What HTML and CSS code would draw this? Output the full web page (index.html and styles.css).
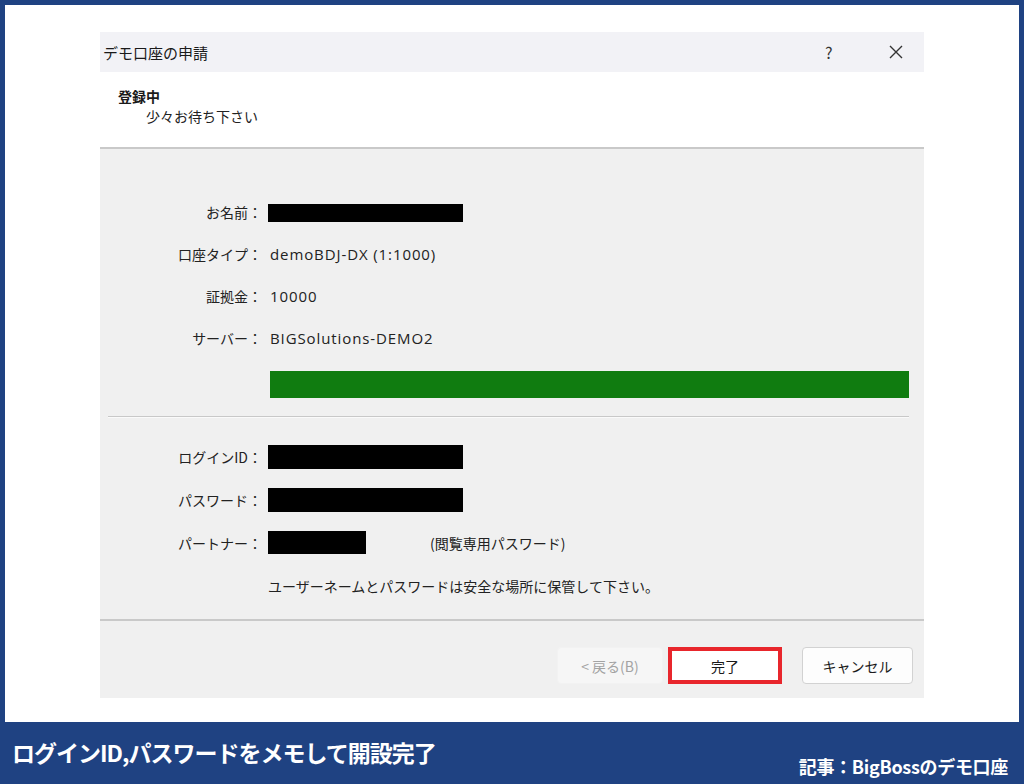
FILE: index.html
```html
<!DOCTYPE html>
<html lang="ja">
<head>
    <meta charset="UTF-8">
    <title>デモ口座の申請</title>
    <link rel="stylesheet" href="styles.css">
</head>
<body>

    <div class="canvas">
        <div class="dialog">
            <div class="titlebar">
                <span class="title">デモ口座の申請</span>
                <span class="help">?</span>
                <span class="close">
                    <svg width="16" height="16" viewBox="0 0 16 16">
                        <path d="M2 2 L14 14 M14 2 L2 14" stroke="#333" stroke-width="1.4" fill="none"/>
                    </svg>
                </span>
            </div>

            <div class="header">
                <div class="head-title">登録中</div>
                <div class="head-sub">少々お待ち下さい</div>
            </div>

            <div class="body">
                <div class="info">
                    <div class="label">お名前：</div>
                    <div class="value"><span class="mask mask-name"></span></div>

                    <div class="label">口座タイプ：</div>
                    <div class="value latin">demoBDJ-DX (1:1000)</div>

                    <div class="label">証拠金：</div>
                    <div class="value latin">10000</div>

                    <div class="label">サーバー：</div>
                    <div class="value latin">BIGSolutions-DEMO2</div>
                </div>

                <div class="progress"></div>
                <div class="divider"></div>

                <div class="info account">
                    <div class="label">ログインID：</div>
                    <div class="value"><span class="mask"></span></div>

                    <div class="label">パスワード：</div>
                    <div class="value"><span class="mask"></span></div>

                    <div class="label">パートナー：</div>
                    <div class="value"><span class="mask mask-short"></span><span class="hint">(閲覧専用パスワード)</span></div>

                    <div class="label"></div>
                    <div class="value note">ユーザーネームとパスワードは安全な場所に保管して下さい。</div>
                </div>
            </div>

            <div class="buttons">
                <button class="btn btn-back" disabled>&lt;&nbsp;戻る(B)</button>
                <button class="btn btn-done">完了</button>
                <button class="btn btn-cancel">キャンセル</button>
            </div>
        </div>
    </div>

    <div class="footer">
        <div class="caption">ログインID,パスワードをメモして開設完了</div>
        <div class="source">記事：BigBossのデモ口座</div>
    </div>

</body>
</html>
```

FILE: styles.css
```css
body {
    margin: 0;
    width: 1024px;
    height: 784px;
    background-color: #1f4282;
    font-family: "Noto Sans CJK JP", "Noto Sans", sans-serif;
    color: #1a1a1a;
    overflow: hidden;
}

.canvas {
    margin: 5px 5px 0 5px;
    height: 717px;
    background-color: #ffffff;
    padding-top: 27px;
    box-sizing: border-box;
}

.dialog {
    margin-left: 95px;
    width: 824px;
    height: 666px;
    background-color: #f0f0f0;
    display: flex;
    flex-direction: column;
}

.titlebar {
    height: 40px;
    background-color: #f2f2f6;
    display: flex;
    align-items: center;
    font-size: 15px;
}

.titlebar .title {
    margin-left: 3px;
    flex: 1;
}

.titlebar .help {
    width: 16px;
    font-size: 16px;
    color: #333;
    margin-right: 47px;
}

.titlebar .close {
    display: flex;
    margin-right: 20px;
}

.header {
    height: 77px;
    background-color: #ffffff;
    border-bottom: 2px solid #c9c9c9;
    padding: 14px 0 0 18px;
    box-sizing: border-box;
}

.head-title {
    font-size: 14px;
    font-weight: bold;
    line-height: 20px;
}

.head-sub {
    font-size: 14px;
    line-height: 21px;
    margin-left: 28px;
    color: #222;
}

.body {
    height: 472px;
    padding-top: 42px;
    box-sizing: border-box;
    border-bottom: 2px solid #c9c9c9;
}

.info {
    display: grid;
    grid-template-columns: 162px 1fr;
    grid-auto-rows: 42px;
    column-gap: 6px;
    font-size: 14px;
}

.info .label {
    display: flex;
    align-items: center;
    justify-content: flex-end;
    color: #222;
}

.info .value {
    display: flex;
    align-items: center;
    color: #222;
}

.info .latin {
    font-family: "Open Sans", "Noto Sans CJK JP", sans-serif;
    font-size: 15px;
    letter-spacing: 0.9px;
    padding-left: 2px;
}

.mask {
    display: inline-block;
    width: 195px;
    height: 24px;
    background-color: #000;
}

.mask-name {
    height: 18px;
    margin-top: 2px;
}

.mask-short {
    width: 98px;
    height: 23px;
}

.hint {
    margin-left: 64px;
}

.progress {
    margin: 12px 15px 0 170px;
    height: 27px;
    background-color: #107c10;
}

.divider {
    margin: 18px 15px 0 8px;
    height: 1px;
    background-color: #c8c8c8;
    border-bottom: 1px solid #fafafa;
}

.account {
    margin-top: 17px;
    grid-auto-rows: 43px;
}

.buttons {
    flex: 1;
    display: flex;
    justify-content: flex-end;
    align-items: flex-start;
    padding: 26px 11px 0 0;
    gap: 5px;
}

.btn {
    font-family: "Noto Sans CJK JP", "Noto Sans", sans-serif;
    font-size: 14px;
    height: 37px;
    border-radius: 4px;
    box-sizing: border-box;
}

.btn-back {
    width: 106px;
    background-color: #f6f6f6;
    border: 1px solid #f2f2f2;
    color: #a3a3a3;
}

.btn-done {
    width: 114px;
    background-color: #ffffff;
    border: 4px solid #e8262c;
    border-radius: 0;
    color: #1a1a1a;
    margin-right: 15px;
}

.btn-cancel {
    width: 111px;
    background-color: #fdfdfd;
    border: 1px solid #d2d2d2;
    color: #1a1a1a;
}

.footer {
    height: 62px;
    display: flex;
    justify-content: space-between;
    align-items: flex-start;
    color: #ffffff;
    font-weight: bold;
}

.caption {
    font-size: 23px;
    margin: 13px 0 0 12px;
    letter-spacing: -1px;
}

.source {
    font-size: 18px;
    margin: 31px 16px 0 0;
    letter-spacing: -0.3px;
}
```
